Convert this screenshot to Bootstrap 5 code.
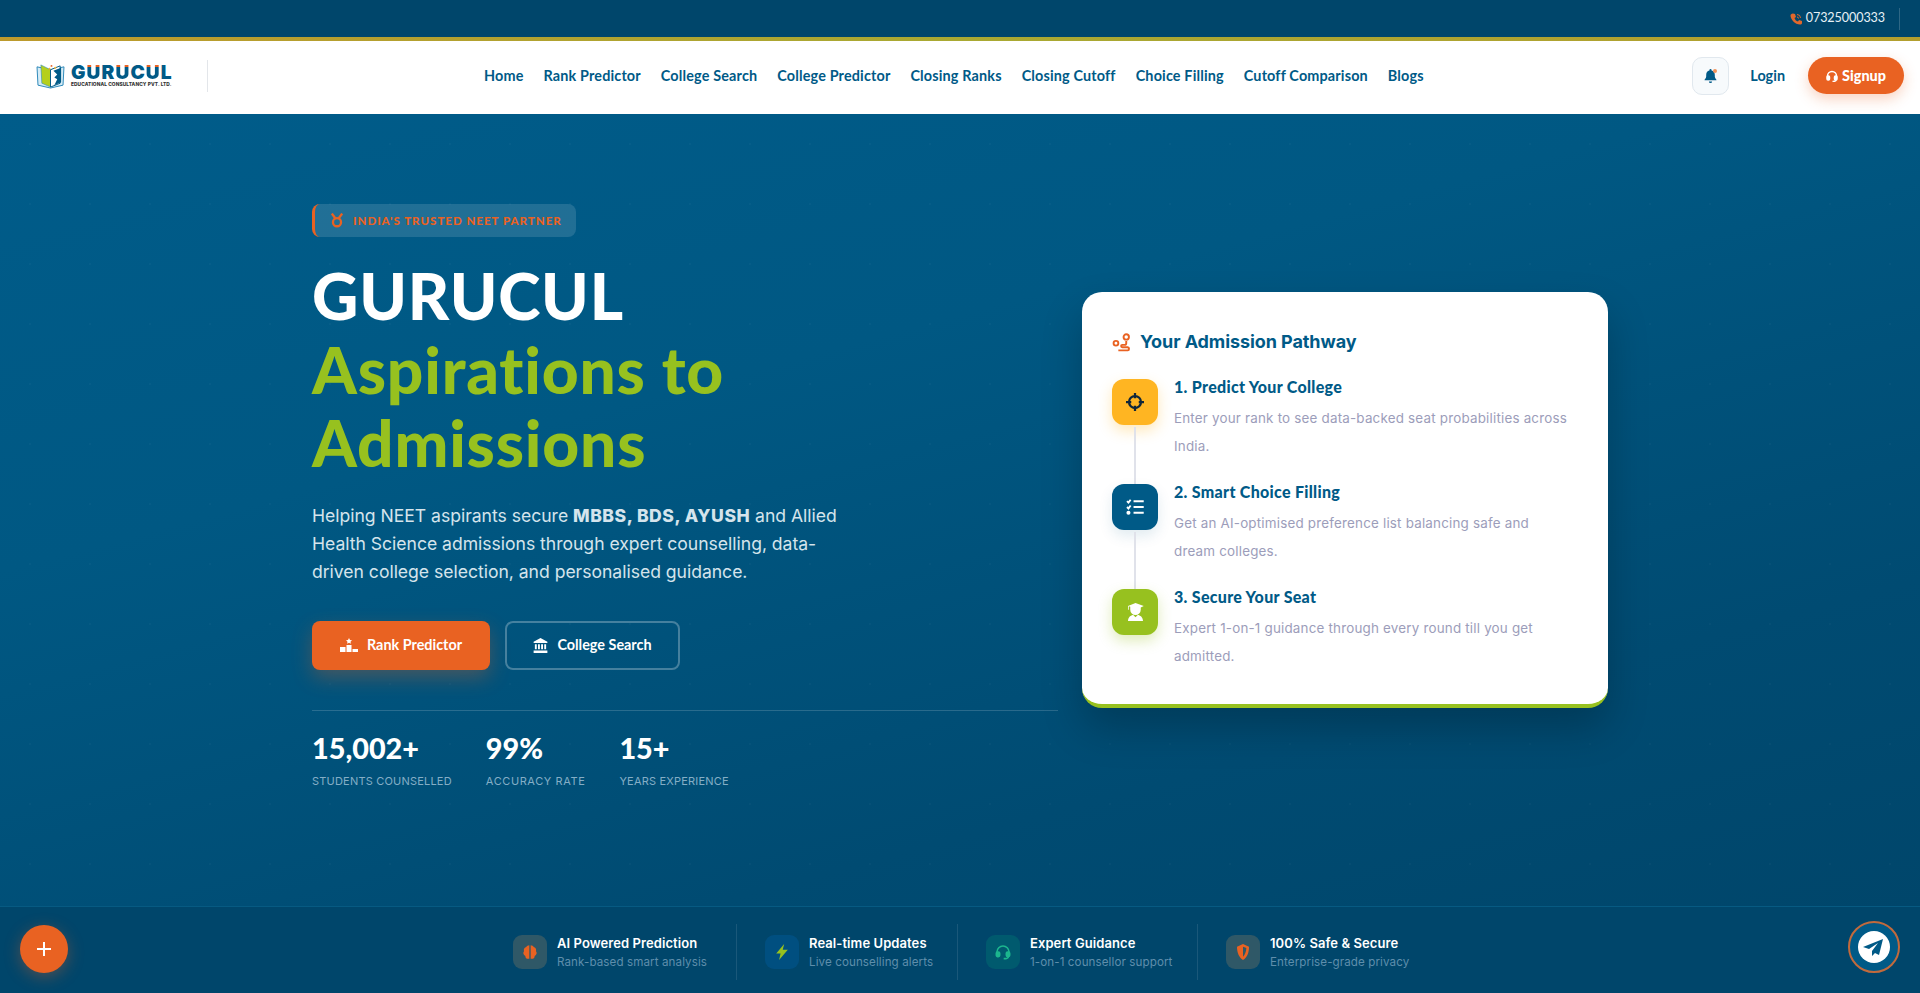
<!DOCTYPE html>
<html lang="en">
<head>
<meta charset="utf-8">
<title>Gurucul</title>
<link rel="stylesheet" href="https://cdn.jsdelivr.net/npm/bootstrap@5.3.0/dist/css/bootstrap.min.css">
<style>
:root{--navy:#00466b;--blue:#005a87;--orange:#e96222;--lime:#97c11f;--amber:#ffb522;}
html,body{height:100%;overflow:hidden}
body{font-family:Lato,sans-serif;background:var(--navy);display:flex;flex-direction:column;height:993px}
.top-strip{height:41px;background:#00466b;border-bottom:4px solid;border-image:linear-gradient(90deg,#bd9a2c,#a9a932 50%,#b39f2e) 1;color:#e6f1f6;font-size:12.6px;letter-spacing:-.1px;padding-right:20px}
.phone-wrap{padding-right:14px;border-right:1px solid rgba(255,255,255,.18);height:22px}
.main-nav{height:73px;padding:0 16px 4px 36px;position:relative}
.brand-box{width:172px;height:32px;border-right:1px solid #e3e6ea;gap:6px}
.brand-name{font-family:Inter,sans-serif;font-weight:900;font-size:19.2px;line-height:17px;letter-spacing:1.1px;color:#005a87}
.brand-name b{font-weight:900;background:linear-gradient(#e96222 30%,#005a87 30%);-webkit-background-clip:text;background-clip:text;color:transparent}
.brand-sub{font-family:Inter,sans-serif;font-weight:800;font-size:4.8px;line-height:7px;color:#333;white-space:nowrap;letter-spacing:.1px}
.nav-links{position:absolute;left:484px;top:0;bottom:4px;gap:20px}
.nav-links a{color:#005a87;font-weight:700;font-size:14.4px;letter-spacing:.16px;text-decoration:none;white-space:nowrap}
.bell-box{width:37px;height:38px;border:1px solid #e1e8ee;border-radius:10px;background:#f7fafc;position:relative}
.bell-dot{position:absolute;width:4px;height:4px;border-radius:50%;background:#f0925a;top:11px;right:11px}
.login-link{color:#005a87;font-weight:700;font-size:14.4px;text-decoration:none;margin:0 23px 0 21px}
.signup-btn{width:96px;height:37px;background:var(--orange);border-radius:19px;color:#fff;font-weight:900;font-size:14.4px;box-shadow:0 5px 14px rgba(233,98,34,.28);gap:4px}
.hero-zone{flex:1;position:relative;background-color:#00527c;background-image:radial-gradient(rgba(255,255,255,.025) 1px,transparent 1.5px),linear-gradient(165deg,#005c8a 0%,#005883 35%,#004b72 75%,#00466b 100%);background-size:60px 60px,100% 100%}
.hero-grid{padding-top:90px}
.tag-pill{width:264px;height:33px;border-left:3px solid var(--orange);border-radius:8px;background:rgba(255,255,255,.13);color:var(--orange);font-size:11.5px;font-weight:900;letter-spacing:1px;padding-left:15px;gap:9px;white-space:nowrap}
.tag-pill svg{flex:none}
.hero-title{font-weight:900;font-size:64px;line-height:73.6px;letter-spacing:.8px;color:#fff;margin:22px 0 0}
.hero-title span{color:var(--lime);display:block;width:460px}
.hero-text{font-family:Inter,sans-serif;font-size:17.6px;line-height:28px;letter-spacing:-.03px;color:#d5e4ec;width:530px;margin:22px 0 0}
.hero-text strong{font-weight:800;letter-spacing:.5px}
.cta-row{margin-top:35px;gap:15px}
.cta-one,.cta-two{height:49px;border-radius:8px;color:#fff;font-weight:700;font-size:14.4px;gap:9px}
.cta-one{width:178px;background:var(--orange);box-shadow:0 8px 20px rgba(233,98,34,.3)}
.cta-two{width:175px;border:2px solid rgba(255,255,255,.27)}
.stat-row{margin-top:40px;padding-top:18px;border-top:1px solid rgba(255,255,255,.16);gap:34px}
.stat-num{font-weight:900;font-size:28.8px;line-height:38px;color:#fff}
.stat-lab{font-family:Inter,sans-serif;font-size:11px;line-height:18px;letter-spacing:.2px;color:#84aec6;text-transform:uppercase;margin-top:5px;white-space:nowrap}
.stat-lab-wide{letter-spacing:.6px}
.path-box{margin-top:88px;height:416px;background:#fff;border-radius:20px;border-bottom:4px solid var(--lime);padding:37px 30px 0;box-shadow:0 20px 40px rgba(0,0,0,.22)}
.path-title{font-family:Inter,sans-serif;font-weight:700;font-size:18px;line-height:26px;letter-spacing:-.08px;color:#005a87;gap:9px;margin-bottom:24px;white-space:nowrap}
.step-item{display:flex;gap:16px;height:105px;position:relative}
.step-item:not(:last-child)::after{content:"";position:absolute;left:22px;top:48px;bottom:0;width:2px;background:#e0e2ea}
.step-ico{width:46px;height:46px;border-radius:12px;flex:none}
.ico-amber{background:var(--amber);box-shadow:0 6px 14px rgba(255,181,34,.3)}
.ico-blue{background:#005a87;box-shadow:0 6px 14px rgba(0,90,135,.12)}
.ico-lime{background:var(--lime);box-shadow:0 6px 14px rgba(151,193,31,.3)}
.step-name{font-weight:900;font-size:16px;line-height:20px;letter-spacing:.3px;color:#005a87;margin:-2px 0 7px}
.step-desc{font-family:Inter,sans-serif;font-size:13.4px;line-height:28px;letter-spacing:.2px;color:#9c9dba;margin:0;white-space:nowrap}
.feat-bar{height:87px;background:#00466b;border-top:1px solid #075a82;position:relative;padding:4px 0 0 513px}
.feat-item{height:56px;gap:10px;white-space:nowrap}
.feat-ico{width:34px;height:34px;border-radius:9px;flex:none}
.ico-slate{background:#2f5867}
.ico-deep{background:#004f80}
.ico-teal{background:#005a6e}
.feat-t{font-family:Inter,sans-serif;font-weight:600;font-size:13px;line-height:18px;letter-spacing:.08px;color:#fff}
.feat-s{font-family:Inter,sans-serif;font-size:11.6px;line-height:18px;letter-spacing:.1px;color:#5f8eab;margin-top:1px}
.feat-text-a{width:151px}
.feat-text-b{width:120px}
.feat-text-c{width:139px}
.feat-sep{width:1px;height:56px;background:rgba(255,255,255,.1);flex:none;margin:0 28px}
.plus-fab{position:absolute;left:20px;top:18px;width:48px;height:48px;border-radius:50%;background:var(--orange);box-shadow:0 4px 16px rgba(233,98,34,.35)}
.tg-fab{position:absolute;left:1848px;top:14px;width:52px;height:52px;border-radius:50%;background:#005a87;border:2px solid #c26a3c}
</style>
</head>
<body>
<div class="top-strip d-flex justify-content-end align-items-center">
  <div class="phone-wrap d-flex align-items-center gap-1">
    <svg width="12" height="12" viewBox="0 0 24 24"><path fill="#e0682c" d="M6 1l4 1 2 6-3 2c1 3 3 6 7 7l2-3 6 2 0 4c0 2-2 3-4 3C10 23 1 13 1 5c0-2 2-4 5-4z"/><path fill="none" stroke="#e0682c" stroke-width="2" d="M14 3a7 7 0 0 1 7 7M14 8a3 3 0 0 1 3 3"/></svg>
    <span>07325000333</span>
  </div>
</div>
<nav class="main-nav bg-white d-flex align-items-center">
  <div class="brand-box d-flex align-items-center">
    <svg width="29" height="26" viewBox="0 0 30 27"><path fill="#d6ecf6" stroke="#2a86b8" d="M1 4l14 3 14-3-1 19-13 3-13-3z"/><path fill="#b5cf1c" stroke="#2a86b8" stroke-width=".6" d="M5 2l10 5v18L6 21z"/><path fill="#fff" stroke="#005a87" d="M25 3l-10 4v18l10-4z"/><path fill="#005a87" d="M18 8l8-3v15l-7 3 3-6-3-2 3-3z"/><circle cx="16" cy="3" r="1" fill="#e96222"/><circle cx="20" cy="5" r="1" fill="#ffb522"/><circle cx="14" cy="6" r="1" fill="#ffb522"/></svg>
    <div>
      <div class="brand-name">G<b>U</b>R<b>U</b>C<b>U</b>L</div>
      <div class="brand-sub">EDUCATIONAL CONSULTANCY PVT. LTD.</div>
    </div>
  </div>
  <div class="nav-links d-flex align-items-center">
    <a href="#">Home</a><a href="#">Rank Predictor</a><a href="#">College Search</a><a href="#">College Predictor</a><a href="#">Closing Ranks</a><a href="#">Closing Cutoff</a><a href="#">Choice Filling</a><a href="#">Cutoff Comparison</a><a href="#">Blogs</a>
  </div>
  <div class="ms-auto d-flex align-items-center">
    <div class="bell-box d-flex align-items-center justify-content-center">
      <svg width="13" height="14" viewBox="0 0 24 26"><path fill="#005a87" d="M12 0a2 2 0 0 1 2 2v1c4 1 6 4 6 8v3c0 2 1 4 3 6v1H1v-1c2-2 3-4 3-6v-3c0-4 2-7 6-8V2a2 2 0 0 1 2-2zM9 23h6a3 3 0 0 1-6 0z"/></svg>
      <span class="bell-dot"></span>
    </div>
    <a class="login-link" href="#">Login</a>
    <div class="signup-btn d-flex align-items-center justify-content-center">
      <svg width="12" height="12" viewBox="0 0 24 24" fill="none" stroke="#fff" stroke-width="3"><path d="M3 15v-3a9 9 0 0 1 18 0v3"/><rect x="2" y="12" width="5" height="8" rx="2" fill="#fff"/><rect x="17" y="12" width="5" height="8" rx="2" fill="#fff"/><path d="M20 20c0 2-3 3-7 3"/></svg>
      <span>Signup</span>
    </div>
  </div>
</nav>
<main class="hero-zone">
  <div class="container hero-grid">
    <div class="row">
      <div class="col-7">
        <div class="tag-pill d-flex align-items-center">
          <svg width="14" height="15" viewBox="0 0 24 26" fill="none" stroke="#e96222" stroke-width="4"><circle cx="12" cy="16" r="7"/><path d="M3 1l6 8M21 1l-6 8"/></svg>
          <span>INDIA'S TRUSTED NEET PARTNER</span>
        </div>
        <h1 class="hero-title">GURUCUL<span>Aspirations to Admissions</span></h1>
        <p class="hero-text">Helping NEET aspirants secure <strong>MBBS, BDS, AYUSH</strong> and Allied Health Science admissions through expert counselling, data-driven college selection, and personalised guidance.</p>
        <div class="cta-row d-flex">
          <div class="cta-one d-flex align-items-center justify-content-center">
            <svg width="18" height="14" viewBox="0 0 18 14" fill="#fff"><path d="M6.500 7h5v7h-5zM0 9h5.500v5H0zM12.500 11H18v3h-5.500zM9 0l1 2 2 .3-1.500 1.400.4 2L9 4.800l-1.900.9.4-2L6 2.300 8 2z"/></svg>
            <span>Rank Predictor</span>
          </div>
          <div class="cta-two d-flex align-items-center justify-content-center">
            <svg width="15" height="15" viewBox="0 0 24 24" fill="#fff"><path d="M12 0l11 6v2H1V6zM3 10h3v8H3zM8 10h3v8H8zM13 10h3v8h-3zM18 10h3v8h-3zM1 20h22v4H1z"/></svg>
            <span>College Search</span>
          </div>
        </div>
        <div class="stat-row d-flex">
          <div><div class="stat-num">15,002+</div><div class="stat-lab">Students Counselled</div></div>
          <div><div class="stat-num">99%</div><div class="stat-lab stat-lab-wide">Accuracy Rate</div></div>
          <div><div class="stat-num">15+</div><div class="stat-lab">Years Experience</div></div>
        </div>
      </div>
      <div class="col-5">
        <div class="path-box">
          <div class="path-title d-flex align-items-center">
            <svg width="19" height="19" viewBox="0 0 24 24" fill="none" stroke="#e96222" stroke-width="2.400"><circle cx="18" cy="5" r="3.400"/><circle cx="5" cy="13" r="3"/><path d="M18 10v3c0 1-1 2-2 2h-3c-2 0-2 3 0 3h7c2 0 2 4 0 4H8"/></svg>
            <span>Your Admission Pathway</span>
          </div>
          <div class="step-item">
            <div class="step-ico ico-amber d-flex align-items-center justify-content-center">
              <svg width="18" height="18" viewBox="0 0 24 24" fill="none" stroke="#10273a" stroke-width="3"><circle cx="12" cy="12" r="8"/><path d="M12 0v7M12 17v7M0 12h7M17 12h7"/></svg>
            </div>
            <div><p class="step-name">1. Predict Your College</p><p class="step-desc">Enter your rank to see data-backed seat probabilities across<br>India.</p></div>
          </div>
          <div class="step-item">
            <div class="step-ico ico-blue d-flex align-items-center justify-content-center">
              <svg width="18" height="16" viewBox="0 0 24 22" fill="none" stroke="#fff" stroke-width="2.600"><path d="M10 3h14M10 11h14M10 19h14M1 3l2 2 3-4M1 11l2 2 3-4"/><circle cx="3" cy="19" r="1.500" fill="#fff"/></svg>
            </div>
            <div><p class="step-name">2. Smart Choice Filling</p><p class="step-desc">Get an AI-optimised preference list balancing safe and<br>dream colleges.</p></div>
          </div>
          <div class="step-item">
            <div class="step-ico ico-lime d-flex align-items-center justify-content-center">
              <svg width="17" height="18" viewBox="0 0 22 24" fill="#fff"><path d="M11 0l11 4-4 2v3a7 7 0 0 1-14 0V5L2 4.300V9H1V4zM1 24c0-5 4-8 7-8l3 3 3-3c3 0 7 3 7 8z"/></svg>
            </div>
            <div><p class="step-name">3. Secure Your Seat</p><p class="step-desc">Expert 1-on-1 guidance through every round till you get<br>admitted.</p></div>
          </div>
        </div>
      </div>
    </div>
  </div>
</main>
<footer class="feat-bar d-flex align-items-center">
  <div class="plus-fab d-flex align-items-center justify-content-center">
    <svg width="16" height="16" viewBox="0 0 16 16" stroke="#fff" stroke-width="2"><path d="M8 1v14M1 8h14"/></svg>
  </div>
  <div class="feat-item d-flex align-items-center">
    <div class="feat-ico ico-slate d-flex align-items-center justify-content-center"><svg width="16" height="16" viewBox="0 0 24 24" fill="#e96222"><path d="M11 2v20c-4 1-6-1-6-4-3-1-4-5-2-7-1-3 1-6 3-6 1-2 3-3 5-3zM13 2v20c4 1 6-1 6-4 3-1 4-5 2-7 1-3-1-6-3-6-1-2-3-3-5-3z"/></svg></div>
    <div class="feat-text-a"><div class="feat-t">AI Powered Prediction</div><div class="feat-s">Rank-based smart analysis</div></div>
  </div>
  <div class="feat-sep"></div>
  <div class="feat-item d-flex align-items-center">
    <div class="feat-ico ico-deep d-flex align-items-center justify-content-center"><svg width="14" height="16" viewBox="0 0 18 22" fill="#97c11f"><path d="M12 0L1 13h6l-2 9 12-14h-7z"/></svg></div>
    <div class="feat-text-b"><div class="feat-t">Real-time Updates</div><div class="feat-s">Live counselling alerts</div></div>
  </div>
  <div class="feat-sep"></div>
  <div class="feat-item d-flex align-items-center">
    <div class="feat-ico ico-teal d-flex align-items-center justify-content-center"><svg width="16" height="16" viewBox="0 0 24 24" fill="none" stroke="#1cb68e" stroke-width="2.400"><path d="M3 15v-3a9 9 0 0 1 18 0v3"/><rect x="2" y="12" width="5" height="7" rx="2" fill="#1cb68e"/><rect x="17" y="12" width="5" height="7" rx="2" fill="#1cb68e"/><path d="M20 19c0 2-3 3-7 3"/></svg></div>
    <div class="feat-text-c"><div class="feat-t">Expert Guidance</div><div class="feat-s">1-on-1 counsellor support</div></div>
  </div>
  <div class="feat-sep"></div>
  <div class="feat-item d-flex align-items-center">
    <div class="feat-ico ico-slate d-flex align-items-center justify-content-center"><svg width="14" height="16" viewBox="0 0 20 24"><path fill="#e96222" d="M10 0l9 4c0 9-3 16-9 20C4 20 1 13 1 4z"/><path fill="#2f5867" d="M10 4l5 2c0 5-2 10-5 13z"/></svg></div>
    <div><div class="feat-t">100% Safe &amp; Secure</div><div class="feat-s">Enterprise-grade privacy</div></div>
  </div>
  <div class="tg-fab d-flex align-items-center justify-content-center">
    <svg width="34" height="34" viewBox="0 0 34 34"><circle cx="17" cy="17" r="16" fill="#fff"/><path fill="#005a87" d="M26 9L6 17l6 2 9-6-6 8 0 5 3-3 4 2z"/></svg>
  </div>
</footer>
</body>
</html>
